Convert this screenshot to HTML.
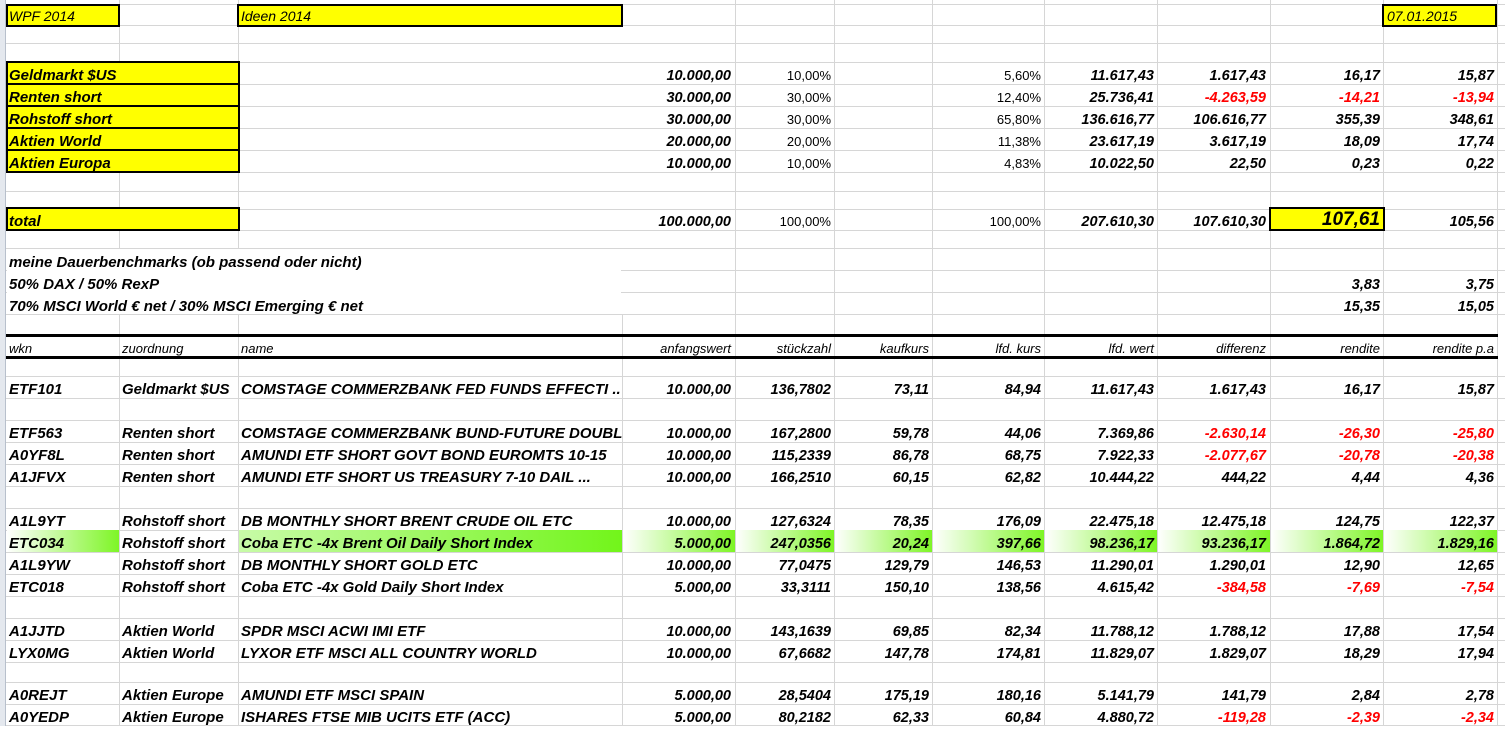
<!DOCTYPE html>
<html><head><meta charset="utf-8"><style>
*{margin:0;padding:0;box-sizing:border-box}
body{width:1505px;height:726px;overflow:hidden;background:#fff;position:relative;font-family:"Liberation Sans",Arial,sans-serif;color:#000}
.v{position:absolute;top:0;height:726px;width:1px;background:#d6d6d6}
.h{position:absolute;left:6px;width:1499px;height:1px;background:#d6d6d6}
.row{position:absolute;left:0;width:1505px}
.row span{position:absolute;top:2px;white-space:nowrap;font-weight:bold;font-style:italic;font-size:14.5px}
.row span.a,.row span.b,.row span.c{font-size:15px}
.a{left:9px}.b{left:122px}.c{left:241px}
.n1,.n2,.n3,.n4,.n5,.n6,.n7,.n8{text-align:right}
.n1{left:622px;width:109px}.n2{left:735px;width:96px}.n3{left:835px;width:94px}.n4{left:933px;width:108px}
.n5{left:1045px;width:109px}.n6{left:1158px;width:108px}.n7{left:1270px;width:110px}.n8{left:1384px;width:110px}
.row span.p{font-weight:normal;font-style:normal;font-size:13px}
.row span.hd{font-weight:normal;font-size:13px}
.row.hr span{top:0}
.r{color:#f00}
.y{position:absolute;background:#ff0;border:2px solid #000}
.g{position:absolute;height:22px;top:530px}
.strip{position:absolute;left:0;top:0;width:6px;height:726px;background:#e4e8ee;border-right:1px solid #b8c0cc}
</style></head><body>
<div class="strip"></div>
<div class="v" style="left:119px"></div><div class="v" style="left:238px"></div><div class="v" style="left:622px;top:314px;height:412px"></div>
<div class="v" style="left:735px"></div><div class="v" style="left:834px"></div><div class="v" style="left:932px"></div>
<div class="v" style="left:1044px"></div><div class="v" style="left:1157px"></div><div class="v" style="left:1270px"></div>
<div class="v" style="left:1383px"></div><div class="v" style="left:1497px"></div>
<div class="h" style="top:4px"></div><div class="h" style="top:25px"></div><div class="h" style="top:43px"></div>
<div class="h" style="top:62px"></div><div class="h" style="top:84px"></div><div class="h" style="top:106px"></div>
<div class="h" style="top:128px"></div><div class="h" style="top:150px"></div><div class="h" style="top:172px"></div>
<div class="h" style="top:191px"></div><div class="h" style="top:209px"></div><div class="h" style="top:230px"></div>
<div class="h" style="top:248px"></div><div class="h" style="top:270px"></div><div class="h" style="top:292px"></div>
<div class="h" style="top:314px"></div>
<div class="h" style="top:376px"></div><div class="h" style="top:398px"></div><div class="h" style="top:420px"></div>
<div class="h" style="top:442px"></div><div class="h" style="top:464px"></div><div class="h" style="top:486px"></div>
<div class="h" style="top:508px"></div><div class="h" style="top:530px"></div><div class="h" style="top:552px"></div>
<div class="h" style="top:574px"></div><div class="h" style="top:596px"></div><div class="h" style="top:618px"></div>
<div class="h" style="top:640px"></div><div class="h" style="top:662px"></div><div class="h" style="top:682px"></div>
<div class="h" style="top:704px"></div><div class="h" style="top:725px"></div>
<div style="position:absolute;left:7px;top:249px;width:614px;height:65px;background:#fff"></div>
<div style="position:absolute;left:6px;top:334px;width:1492px;height:3px;background:#000"></div>
<div style="position:absolute;left:6px;top:356px;width:1492px;height:3px;background:#000"></div>
<div class="y" style="left:6px;top:4px;width:114px;height:23px"></div>
<div class="y" style="left:237px;top:4px;width:386px;height:23px"></div>
<div class="y" style="left:1382px;top:4px;width:115px;height:23px"></div>
<div class="y" style="left:6px;top:61px;width:234px;height:24px"></div>
<div class="y" style="left:6px;top:83px;width:234px;height:24px"></div>
<div class="y" style="left:6px;top:105px;width:234px;height:24px"></div>
<div class="y" style="left:6px;top:127px;width:234px;height:24px"></div>
<div class="y" style="left:6px;top:149px;width:234px;height:24px"></div>
<div class="y" style="left:6px;top:207px;width:234px;height:24px"></div>
<div class="y" style="left:1269px;top:207px;width:116px;height:24px"></div>
<div class="g" style="left:7px;width:112px;background:linear-gradient(90deg,#fff,#7ef526)"></div>
<div class="g" style="left:239px;width:383px;background:linear-gradient(90deg,#c8fba8,#72f51a)"></div>
<div class="g" style="left:623px;width:112px;background:linear-gradient(90deg,#fff,#7ef526)"></div>
<div class="g" style="left:736px;width:98px;background:linear-gradient(90deg,#fff,#7ef526)"></div>
<div class="g" style="left:835px;width:97px;background:linear-gradient(90deg,#fff,#7ef526)"></div>
<div class="g" style="left:933px;width:111px;background:linear-gradient(90deg,#fff,#7ef526)"></div>
<div class="g" style="left:1045px;width:112px;background:linear-gradient(90deg,#fff,#7ef526)"></div>
<div class="g" style="left:1158px;width:112px;background:linear-gradient(90deg,#fff,#7ef526)"></div>
<div class="g" style="left:1271px;width:112px;background:linear-gradient(90deg,#fff,#7ef526)"></div>
<div class="g" style="left:1384px;width:113px;background:linear-gradient(90deg,#fff,#7ef526)"></div>

<div class="row" style="top:3px;height:22px;line-height:22px"><span class="a hd" style="font-size:14px;font-weight:normal">WPF 2014</span><span class="c hd" style="font-size:14px;font-weight:normal">Ideen 2014</span><span class="n8 hd" style="left:1387px;text-align:left;font-size:14px">07.01.2015</span></div>

<div class="row" style="top:62px;height:22px;line-height:24px"><span class="a">Geldmarkt $US</span><span class="n1">10.000,00</span><span class="n2 p">10,00%</span><span class="n4 p">5,60%</span><span class="n5">11.617,43</span><span class="n6">1.617,43</span><span class="n7">16,17</span><span class="n8">15,87</span></div>
<div class="row" style="top:84px;height:22px;line-height:24px"><span class="a">Renten short</span><span class="n1">30.000,00</span><span class="n2 p">30,00%</span><span class="n4 p">12,40%</span><span class="n5">25.736,41</span><span class="n6 r">-4.263,59</span><span class="n7 r">-14,21</span><span class="n8 r">-13,94</span></div>
<div class="row" style="top:106px;height:22px;line-height:24px"><span class="a">Rohstoff short</span><span class="n1">30.000,00</span><span class="n2 p">30,00%</span><span class="n4 p">65,80%</span><span class="n5">136.616,77</span><span class="n6">106.616,77</span><span class="n7">355,39</span><span class="n8">348,61</span></div>
<div class="row" style="top:128px;height:22px;line-height:24px"><span class="a">Aktien World</span><span class="n1">20.000,00</span><span class="n2 p">20,00%</span><span class="n4 p">11,38%</span><span class="n5">23.617,19</span><span class="n6">3.617,19</span><span class="n7">18,09</span><span class="n8">17,74</span></div>
<div class="row" style="top:150px;height:22px;line-height:24px"><span class="a">Aktien Europa</span><span class="n1">10.000,00</span><span class="n2 p">10,00%</span><span class="n4 p">4,83%</span><span class="n5">10.022,50</span><span class="n6">22,50</span><span class="n7">0,23</span><span class="n8">0,22</span></div>
<div class="row" style="top:209px;height:21px;line-height:22px"><span class="a">total</span><span class="n1">100.000,00</span><span class="n2 p">100,00%</span><span class="n4 p">100,00%</span><span class="n5">207.610,30</span><span class="n6">107.610,30</span><span class="n7" style="font-size:19px;top:0">107,61</span><span class="n8">105,56</span></div>
<div class="row" style="top:250px;height:22px;line-height:22px"><span class="a">meine Dauerbenchmarks (ob passend oder nicht)</span></div>
<div class="row" style="top:272px;height:22px;line-height:22px"><span class="a">50% DAX / 50% RexP</span><span class="n7">3,83</span><span class="n8">3,75</span></div>
<div class="row" style="top:294px;height:22px;line-height:22px"><span class="a">70% MSCI World € net / 30% MSCI Emerging € net</span><span class="n7">15,35</span><span class="n8">15,05</span></div>
<div class="row hr" style="top:338px;height:18px;line-height:22px"><span class="a hd" style="font-size:13px;font-weight:normal">wkn</span><span class="b hd" style="font-size:13px;font-weight:normal">zuordnung</span><span class="c hd" style="font-size:13px;font-weight:normal">name</span><span class="n1 hd">anfangswert</span><span class="n2 hd">stückzahl</span><span class="n3 hd">kaufkurs</span><span class="n4 hd">lfd. kurs</span><span class="n5 hd">lfd. wert</span><span class="n6 hd">differenz</span><span class="n7 hd">rendite</span><span class="n8 hd">rendite p.a</span></div>

<div class="row" style="top:377px;height:22px;line-height:22px"><span class="a">ETF101</span><span class="b">Geldmarkt $US</span><span class="c">COMSTAGE COMMERZBANK FED FUNDS EFFECTI ..</span><span class="n1">10.000,00</span><span class="n2">136,7802</span><span class="n3">73,11</span><span class="n4">84,94</span><span class="n5">11.617,43</span><span class="n6">1.617,43</span><span class="n7">16,17</span><span class="n8">15,87</span></div>
<div class="row" style="top:421px;height:22px;line-height:22px"><span class="a">ETF563</span><span class="b">Renten short</span><span class="c" style="width:381px;overflow:hidden">COMSTAGE COMMERZBANK BUND-FUTURE DOUBLE</span><span class="n1">10.000,00</span><span class="n2">167,2800</span><span class="n3">59,78</span><span class="n4">44,06</span><span class="n5">7.369,86</span><span class="n6 r">-2.630,14</span><span class="n7 r">-26,30</span><span class="n8 r">-25,80</span></div>
<div class="row" style="top:443px;height:22px;line-height:22px"><span class="a">A0YF8L</span><span class="b">Renten short</span><span class="c">AMUNDI ETF SHORT GOVT BOND EUROMTS 10-15</span><span class="n1">10.000,00</span><span class="n2">115,2339</span><span class="n3">86,78</span><span class="n4">68,75</span><span class="n5">7.922,33</span><span class="n6 r">-2.077,67</span><span class="n7 r">-20,78</span><span class="n8 r">-20,38</span></div>
<div class="row" style="top:465px;height:22px;line-height:22px"><span class="a">A1JFVX</span><span class="b">Renten short</span><span class="c">AMUNDI ETF SHORT US TREASURY 7-10 DAIL ...</span><span class="n1">10.000,00</span><span class="n2">166,2510</span><span class="n3">60,15</span><span class="n4">62,82</span><span class="n5">10.444,22</span><span class="n6">444,22</span><span class="n7">4,44</span><span class="n8">4,36</span></div>
<div class="row" style="top:509px;height:22px;line-height:22px"><span class="a">A1L9YT</span><span class="b">Rohstoff short</span><span class="c">DB MONTHLY SHORT BRENT CRUDE OIL ETC</span><span class="n1">10.000,00</span><span class="n2">127,6324</span><span class="n3">78,35</span><span class="n4">176,09</span><span class="n5">22.475,18</span><span class="n6">12.475,18</span><span class="n7">124,75</span><span class="n8">122,37</span></div>
<div class="row" style="top:531px;height:22px;line-height:22px"><span class="a">ETC034</span><span class="b">Rohstoff short</span><span class="c">Coba ETC -4x Brent Oil Daily Short Index</span><span class="n1">5.000,00</span><span class="n2">247,0356</span><span class="n3">20,24</span><span class="n4">397,66</span><span class="n5">98.236,17</span><span class="n6">93.236,17</span><span class="n7">1.864,72</span><span class="n8">1.829,16</span></div>
<div class="row" style="top:553px;height:22px;line-height:22px"><span class="a">A1L9YW</span><span class="b">Rohstoff short</span><span class="c">DB MONTHLY SHORT GOLD ETC</span><span class="n1">10.000,00</span><span class="n2">77,0475</span><span class="n3">129,79</span><span class="n4">146,53</span><span class="n5">11.290,01</span><span class="n6">1.290,01</span><span class="n7">12,90</span><span class="n8">12,65</span></div>
<div class="row" style="top:575px;height:22px;line-height:22px"><span class="a">ETC018</span><span class="b">Rohstoff short</span><span class="c">Coba ETC -4x Gold Daily Short Index</span><span class="n1">5.000,00</span><span class="n2">33,3111</span><span class="n3">150,10</span><span class="n4">138,56</span><span class="n5">4.615,42</span><span class="n6 r">-384,58</span><span class="n7 r">-7,69</span><span class="n8 r">-7,54</span></div>
<div class="row" style="top:619px;height:22px;line-height:22px"><span class="a">A1JJTD</span><span class="b">Aktien World</span><span class="c">SPDR MSCI ACWI IMI ETF</span><span class="n1">10.000,00</span><span class="n2">143,1639</span><span class="n3">69,85</span><span class="n4">82,34</span><span class="n5">11.788,12</span><span class="n6">1.788,12</span><span class="n7">17,88</span><span class="n8">17,54</span></div>
<div class="row" style="top:641px;height:22px;line-height:22px"><span class="a">LYX0MG</span><span class="b">Aktien World</span><span class="c">LYXOR ETF MSCI ALL COUNTRY WORLD</span><span class="n1">10.000,00</span><span class="n2">67,6682</span><span class="n3">147,78</span><span class="n4">174,81</span><span class="n5">11.829,07</span><span class="n6">1.829,07</span><span class="n7">18,29</span><span class="n8">17,94</span></div>
<div class="row" style="top:683px;height:22px;line-height:22px"><span class="a">A0REJT</span><span class="b">Aktien Europe</span><span class="c">AMUNDI ETF MSCI SPAIN</span><span class="n1">5.000,00</span><span class="n2">28,5404</span><span class="n3">175,19</span><span class="n4">180,16</span><span class="n5">5.141,79</span><span class="n6">141,79</span><span class="n7">2,84</span><span class="n8">2,78</span></div>
<div class="row" style="top:705px;height:22px;line-height:22px"><span class="a">A0YEDP</span><span class="b">Aktien Europe</span><span class="c">ISHARES FTSE MIB UCITS ETF (ACC)</span><span class="n1">5.000,00</span><span class="n2">80,2182</span><span class="n3">62,33</span><span class="n4">60,84</span><span class="n5">4.880,72</span><span class="n6 r">-119,28</span><span class="n7 r">-2,39</span><span class="n8 r">-2,34</span></div>
</body></html>
